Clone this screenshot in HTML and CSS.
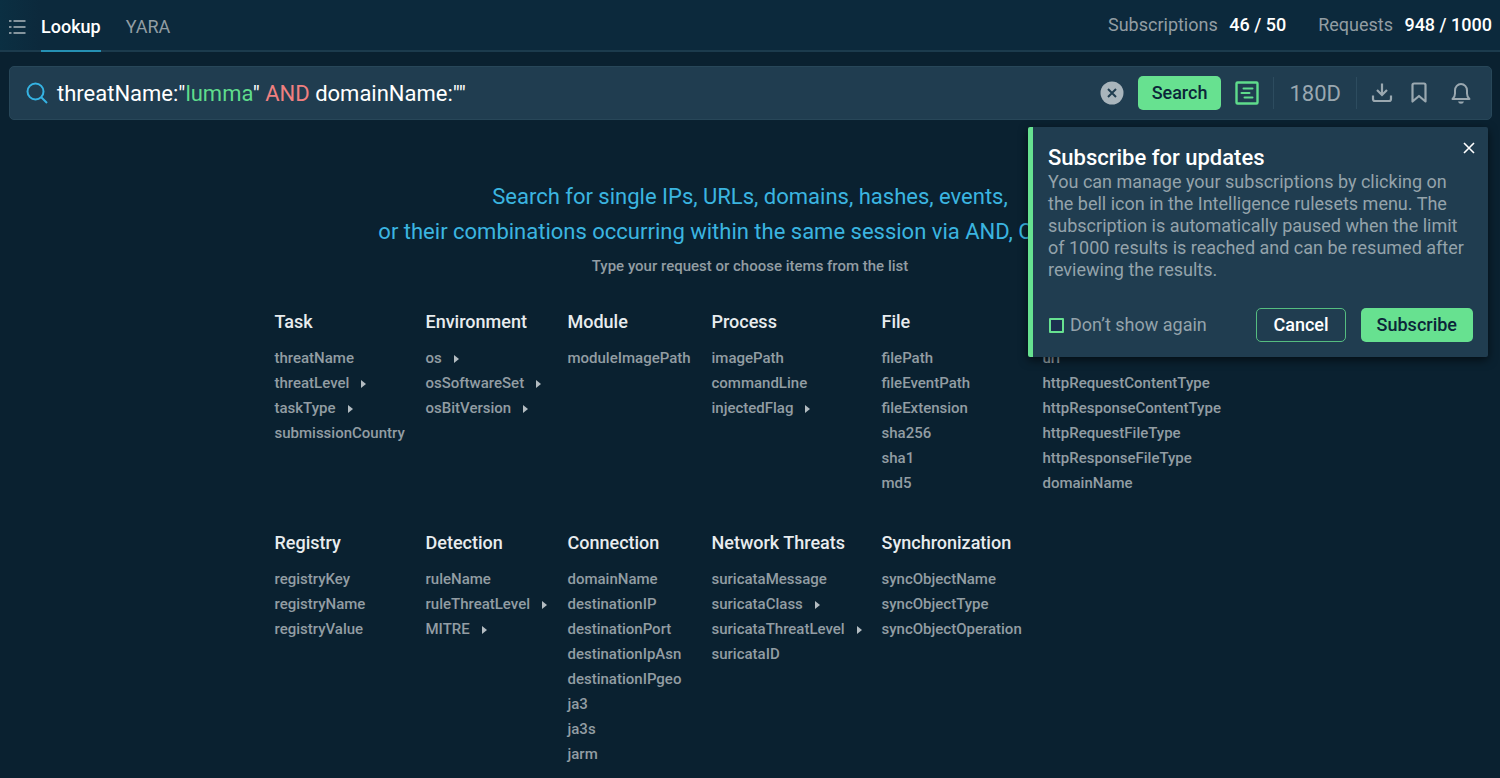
FILE: index.html
```html
<!DOCTYPE html>
<html lang="en">
  <head>
    <meta charset="utf-8">
    <title>Threat Intelligence Lookup</title>
    <link rel="stylesheet" href="styles.css">
  </head>
  <body>
    <header class="topbar">
        <button class="icon-btn menu" type="button" aria-label="Menu">
            <svg width="18" height="16" viewBox="0 0 18 16" fill="none" stroke="currentColor" stroke-width="1.8">
                <path d="M5.500 2h12M5.500 8h12M5.500 14h12M1 2h2.500M1 8h2.500M1 14h2.500" />
            </svg>
        </button>
        <nav class="tabs">
            <a class="tab active" href="#lookup">Lookup</a>
            <a class="tab" href="#yara">YARA</a>
        </nav>
        <div class="limits">
            <span class="limit">Subscriptions <b>46 / 50</b></span>
            <span class="limit">Requests <b>948 / 1000</b></span>
        </div>
    </header>

    <form class="search" id="lookup">
        <svg class="loupe" width="22" height="22" viewBox="0 0 22 22" fill="none" stroke="currentColor" stroke-width="2">
            <circle cx="9.500" cy="9.500" r="8" />
            <path d="M15 15l6 6" />
        </svg>
        <div class="query">
            <div class="highlight" aria-hidden="true">threatName:"<span class="value">lumma</span>" <span class="operator">AND</span> domainName:""</div>
            <input class="query-input" type="text" aria-label="Query" spellcheck="false" value="threatName:&quot;lumma&quot; AND domainName:&quot;&quot;">
        </div>
        <button class="icon-btn clear" type="button" aria-label="Clear">
            <svg width="24" height="24" viewBox="0 0 24 24">
                <circle cx="12" cy="12" r="11.5" fill="#a9b5bc" />
                <path d="M8 8l8 8M16 8l-8 8" stroke="#203d50" stroke-width="2" />
            </svg>
        </button>
        <button class="btn primary run" type="button">Search</button>
        <button class="icon-btn examples" type="button" aria-label="Examples">
            <svg width="24" height="24" viewBox="0 0 24 24" fill="none" stroke="currentColor" stroke-width="2.400">
                <rect x="1.5" y="1.5" width="21" height="21" rx="1" />
                <path d="M8.500 7.500h9M6.500 12h8M9.500 16.500h8" stroke-width="2" stroke-linecap="round" />
            </svg>
        </button>
        <button class="period" type="button">180D</button>
        <div class="actions">
            <button class="icon-btn" type="button" aria-label="Download">
                <svg width="22" height="22" viewBox="0 0 22 22" fill="none" stroke="currentColor" stroke-width="2.200">
                    <path d="M11 1.500v11M6 8l5 5 5-5M2 13.500v3.500q0 2 2 2h14q2 0 2-2v-3.500" />
                </svg>
            </button>
            <button class="icon-btn" type="button" aria-label="Bookmarks">
                <svg width="16" height="22" viewBox="0 0 16 22" fill="none" stroke="currentColor" stroke-width="2.200" stroke-linejoin="round">
                    <path d="M1.500 19.500V3q0-1.500 1.500-1.500h10q1.500 0 1.500 1.500v16.500l-6.500-5.500z" />
                </svg>
            </button>
            <button class="icon-btn bell" type="button" aria-label="Subscribe">
                <svg width="20" height="22" viewBox="0 0 20 22" fill="none" stroke="currentColor" stroke-width="2" stroke-linejoin="round">
                    <path d="M1.500 17q2.500-2 2.500-5.500v-3a6 6.500 0 0 1 12 0v3q0 3.500 2.500 5.500z" />
                    <path d="M7 19.500h6q-.5 2.300-3 2.300t-3-2.300z" fill="currentColor" stroke="none" />
                </svg>
            </button>
        </div>
    </form>

    <main class="content">
        <h1 class="intro">Search for single IPs, URLs, domains, hashes, events,<br>or their combinations occurring within the same session via AND, OR or NOT</h1>
        <p class="hint">Type your request or choose items from the list</p>

        <div class="groups">
            <section class="group">
                <h2>Task</h2>
                <ul>
                    <li><a href="#">threatName</a></li>
                    <li><a class="more" href="#">threatLevel</a></li>
                    <li><a class="more" href="#">taskType</a></li>
                    <li><a href="#">submissionCountry</a></li>
                </ul>
            </section>
            <section class="group">
                <h2>Environment</h2>
                <ul>
                    <li><a class="more" href="#">os</a></li>
                    <li><a class="more" href="#">osSoftwareSet</a></li>
                    <li><a class="more" href="#">osBitVersion</a></li>
                </ul>
            </section>
            <section class="group">
                <h2>Module</h2>
                <ul>
                    <li><a href="#">moduleImagePath</a></li>
                </ul>
            </section>
            <section class="group">
                <h2>Process</h2>
                <ul>
                    <li><a href="#">imagePath</a></li>
                    <li><a href="#">commandLine</a></li>
                    <li><a class="more" href="#">injectedFlag</a></li>
                </ul>
            </section>
            <section class="group">
                <h2>File</h2>
                <ul>
                    <li><a href="#">filePath</a></li>
                    <li><a href="#">fileEventPath</a></li>
                    <li><a href="#">fileExtension</a></li>
                    <li><a href="#">sha256</a></li>
                    <li><a href="#">sha1</a></li>
                    <li><a href="#">md5</a></li>
                </ul>
            </section>
            <section class="group">
                <h2>URL</h2>
                <ul>
                    <li><a href="#">url</a></li>
                    <li><a href="#">httpRequestContentType</a></li>
                    <li><a href="#">httpResponseContentType</a></li>
                    <li><a href="#">httpRequestFileType</a></li>
                    <li><a href="#">httpResponseFileType</a></li>
                    <li><a href="#">domainName</a></li>
                </ul>
            </section>
            <section class="group">
                <h2>Registry</h2>
                <ul>
                    <li><a href="#">registryKey</a></li>
                    <li><a href="#">registryName</a></li>
                    <li><a href="#">registryValue</a></li>
                </ul>
            </section>
            <section class="group">
                <h2>Detection</h2>
                <ul>
                    <li><a href="#">ruleName</a></li>
                    <li><a class="more" href="#">ruleThreatLevel</a></li>
                    <li><a class="more" href="#">MITRE</a></li>
                </ul>
            </section>
            <section class="group">
                <h2>Connection</h2>
                <ul>
                    <li><a href="#">domainName</a></li>
                    <li><a href="#">destinationIP</a></li>
                    <li><a href="#">destinationPort</a></li>
                    <li><a href="#">destinationIpAsn</a></li>
                    <li><a href="#">destinationIPgeo</a></li>
                    <li><a href="#">ja3</a></li>
                    <li><a href="#">ja3s</a></li>
                    <li><a href="#">jarm</a></li>
                </ul>
            </section>
            <section class="group">
                <h2>Network Threats</h2>
                <ul>
                    <li><a href="#">suricataMessage</a></li>
                    <li><a class="more" href="#">suricataClass</a></li>
                    <li><a class="more" href="#">suricataThreatLevel</a></li>
                    <li><a href="#">suricataID</a></li>
                </ul>
            </section>
            <section class="group">
                <h2>Synchronization</h2>
                <ul>
                    <li><a href="#">syncObjectName</a></li>
                    <li><a href="#">syncObjectType</a></li>
                    <li><a href="#">syncObjectOperation</a></li>
                </ul>
            </section>
        </div>
    </main>

    <div class="popup" role="dialog" aria-labelledby="popup-title">
        <button class="icon-btn close" type="button" aria-label="Close">
            <svg width="12" height="12" viewBox="0 0 12 12" stroke="currentColor" stroke-width="1.600">
                <path d="M1 1l10 10M11 1L1 11" />
            </svg>
        </button>
        <h2 id="popup-title">Subscribe for updates</h2>
        <p>You can manage your subscriptions by clicking on the bell icon in the Intelligence rulesets menu. The subscription is automatically paused when the limit of 1000 results is reached and can be resumed after reviewing the results.</p>
        <div class="popup-footer">
            <input id="dont-show" type="checkbox">
            <label for="dont-show">Don’t show again</label>
            <button class="btn outline" type="button">Cancel</button>
            <button class="btn primary" type="button">Subscribe</button>
        </div>
    </div>
  </body>
</html>
```
FILE: styles.css
```css
* {
    box-sizing: border-box;
}
html {
    min-height: 100%;
    background: #0a2130;
}
body {
    position: relative;
    margin: 0;
    color: #929da3;
    font: 16px/24px Roboto, "Liberation Sans", sans-serif;
}
h1, h2, p, ul {
    margin: 0;
    padding: 0;
}
a {
    color: inherit;
    text-decoration: none;
}
button {
    padding: 0;
    border: 0;
    background: none;
    color: inherit;
    font: inherit;
    cursor: pointer;
}
svg {
    display: block;
}

/* top bar */
.topbar {
    display: flex;
    align-items: stretch;
    height: 52px;
    padding: 0 8px;
    border-bottom: 2px solid #1c3b4d;
    background: linear-gradient(to right, #0b2f42, #0c293c 40px);
}
.menu {
    margin-right: 15px;
    padding-top: 3px;
    color: #84949d;
}
.tabs {
    display: flex;
    gap: 25px;
}
.tab {
    height: 52px;
    padding-top: 2px;
    font-size: 18px;
    line-height: 50px;
}
.active {
    border-bottom: 2px solid #2590b3;
    color: #fff;
    font-weight: 500;
}
.limits {
    display: flex;
    gap: 32px;
    margin-left: auto;
    font-size: 18px;
    line-height: 50px;
}
.limit b {
    margin-left: 7px;
    color: #fff;
    font-weight: 500;
}

/* search bar */
.search {
    display: flex;
    align-items: center;
    height: 54px;
    margin: 14px 8px 0 9px;
    padding: 0 20px 0 16px;
    border: 1px solid #284759;
    border-radius: 5px;
    background: #203d50;
    color: #9aa8b0;
}
.loupe {
    flex: none;
    color: #35b3e3;
}
.query {
    display: grid;
    flex: 1;
    margin-left: 9px;
    padding-top: 2px;
    font-size: 22px;
    line-height: 32px;
}
.highlight, .query-input {
    grid-area: 1 / 1;
    white-space: pre;
}
.highlight {
    color: #fff;
}
.highlight .value {
    color: #5fdc8c;
}
.highlight .operator {
    color: #f08080;
}
/* the input holds the caret, the text is painted by .highlight */
.query-input {
    min-width: 0;
    padding: 0;
    border: 0;
    outline: 0;
    background: none;
    color: transparent;
    caret-color: #fff;
    font: inherit;
}
.btn {
    height: 34px;
    padding: 0 16px;
    border-radius: 5px;
    font-size: 18px;
    font-weight: 500;
    line-height: 32px;
}
.primary {
    background: #67e190;
    color: #0b2639;
}
.outline {
    border: 1px solid #55bd80;
    color: #fff;
}
.run {
    padding: 0 14px;
}
.clear {
    margin-right: 14px;
}
.examples {
    margin: 0 14px;
    color: #5fdc8c;
}
.period {
    height: 32px;
    padding: 0 15px;
    border: 1px solid #2d4c5f;
    border-width: 0 1px;
    font-size: 22px;
    line-height: 34px;
}
.actions {
    display: flex;
    gap: 18px;
    margin-left: 14px;
}
.bell {
    margin-left: 6px;
}

/* request items */
.content {
    padding: 59px 24px 12px;
}
.intro {
    color: #3bb5e0;
    font-size: 22px;
    font-weight: 400;
    line-height: 35px;
    text-align: center;
}
.hint {
    margin-top: 5px;
    font-size: 15px;
    font-weight: 500;
    text-align: center;
}
.groups {
    display: grid;
    grid-template-columns: 134px 125px 127px 153px 144px 183px;
    justify-content: center;
    gap: 35px 17px;
    margin-top: 32px;
}
.group h2 {
    margin-bottom: 12px;
    color: #e8ecee;
    font-size: 18px;
    font-weight: 500;
    line-height: 24px;
    white-space: nowrap;
}
.group ul {
    list-style: none;
    font-size: 15px;
    font-weight: 500;
    line-height: 25px;
    white-space: nowrap;
}
.more::after {
    content: "";
    display: inline-block;
    margin-left: 12px;
    border: 4px solid transparent;
    border-right: 0;
    border-left: 5px solid #b3bcc1;
}

/* subscribe popup */
.popup {
    position: absolute;
    top: 127px;
    right: 12px;
    width: 460px;
    padding: 18px 15px 15px;
    border-left: 5px solid #67e190;
    border-radius: 2px;
    background: #203d50;
    box-shadow: 0 3px 10px rgba(0, 0, 0, 0.6);
    color: #94a3ab;
}
.popup h2 {
    color: #fff;
    font-size: 22px;
    font-weight: 500;
    line-height: 26px;
}
.popup p {
    font-size: 18px;
    line-height: 22px;
}
.close {
    position: absolute;
    top: 15px;
    right: 13px;
    color: #fff;
}
.popup-footer {
    display: flex;
    align-items: center;
    margin-top: 27px;
    font-size: 18px;
}
.popup-footer input {
    appearance: none;
    width: 15px;
    height: 15px;
    margin: 0 6px 0 1px;
    border: 2px solid #67e190;
    border-radius: 1px;
    background: #1b304f;
}
.popup-footer input:checked {
    background: #67e190;
}
.outline {
    margin: 0 15px 0 auto;
}
```
